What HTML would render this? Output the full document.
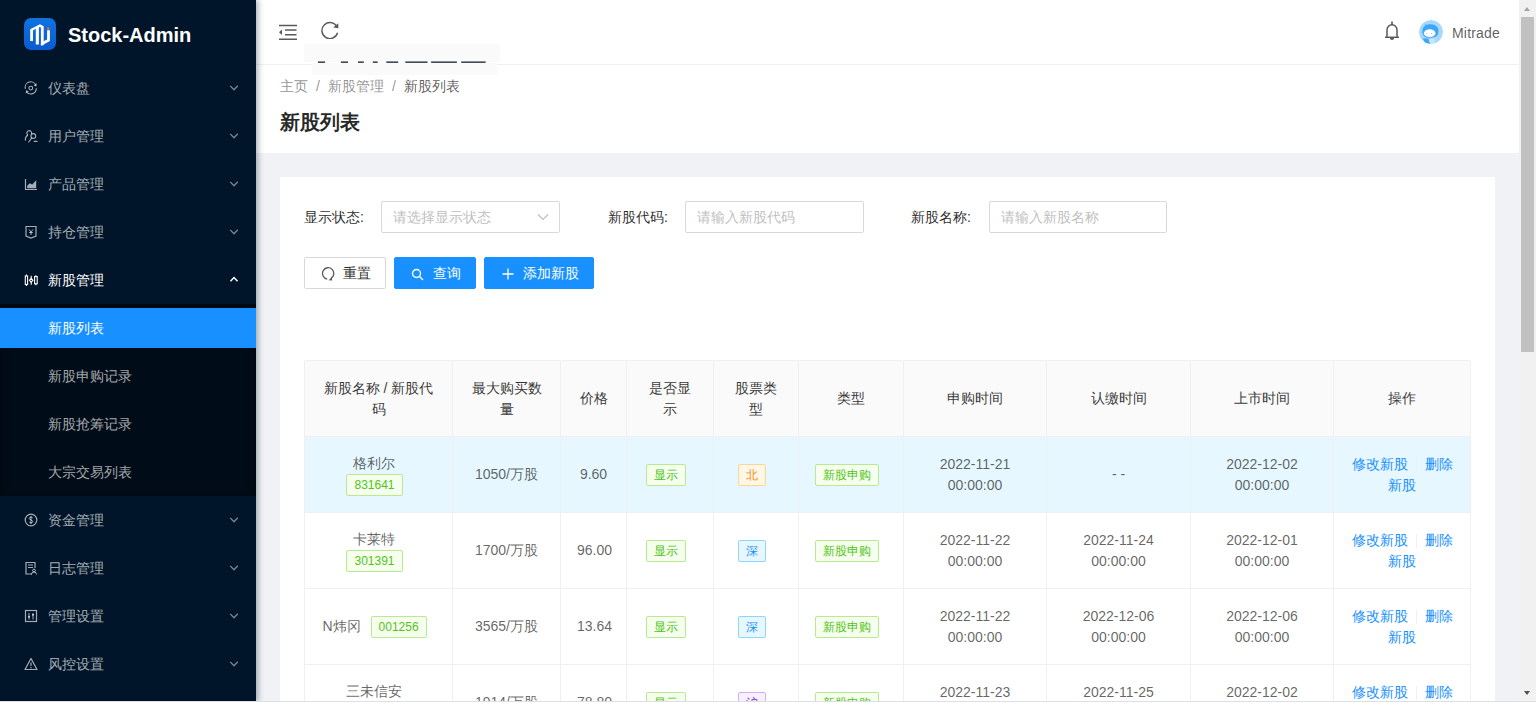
<!DOCTYPE html>
<html><head><meta charset="utf-8">
<style>
*{box-sizing:border-box;margin:0;padding:0}
html,body{width:1536px;height:702px;overflow:hidden;background:#f0f2f5;font-family:"Liberation Sans",sans-serif;font-size:14px;color:rgba(0,0,0,.85)}
#side{position:absolute;left:0;top:0;width:256px;height:702px;background:#001529;z-index:3;box-shadow:2px 0 6px rgba(0,21,41,.35)}
.logo{position:absolute;left:0;top:0;width:256px;height:64px}
.logo .ic{position:absolute;left:24px;top:18px;width:32px;height:32px;border-radius:7px;background:linear-gradient(180deg,#0e74de,#0a5bd0)}
.logo .tx{position:absolute;left:68px;top:21px;font-size:20px;font-weight:bold;color:#fff;line-height:28px}
.mi{position:absolute;left:0;width:256px;height:40px;line-height:40px;color:rgba(255,255,255,.65);font-size:14px}
.mi .t{position:absolute;left:48px;top:0}
.mi .i{position:absolute;left:24px;top:13px;width:14px;height:14px}
.mi .ar{position:absolute;left:228.5px;top:15.5px;width:10px;height:7px;opacity:.75}
.sub{position:absolute;left:0;top:304px;width:256px;height:192px;background:#000c17;box-shadow:inset 0 2px 8px rgba(0,0,0,.45)}
.sel{background:#1890ff;color:#fff}
#main{position:absolute;left:256px;top:0;width:1263px;height:702px;background:#f0f2f5}
#hdr{position:absolute;left:0;top:0;width:1263px;height:65px;background:#fff;border-bottom:1px solid #f0f0f0}
#ph{position:absolute;left:0;top:65px;width:1263px;height:88px;background:#fff}
.crumb{position:absolute;left:24px;top:10px;line-height:22px;color:rgba(0,0,0,.45)}
.crumb .sep{margin:0 8px}
.ptitle{position:absolute;left:24px;top:41px;font-size:20px;font-weight:bold;line-height:32px;color:rgba(0,0,0,.85)}
.ghost1{position:absolute;left:48px;top:44px;width:196px;height:18px;background:#fafafa}
.ghost2{position:absolute;left:56px;top:63px;width:185px;height:12px;background:#fafafa;z-index:2}
.ghostline{position:absolute;left:0;top:61px;width:250px;height:3px;z-index:3}
.avatar{position:absolute;left:1163px;top:20px;width:24px;height:24px;border-radius:50%;overflow:hidden}
.uname{position:absolute;left:1196px;top:21.5px;line-height:22px;font-size:14px;letter-spacing:.2px;color:rgba(0,0,0,.65)}
#card{position:absolute;left:24px;top:177px;width:1215px;height:600px;background:#fff}
.lbl{position:absolute;top:29px;line-height:22px;color:rgba(0,0,0,.85)}
.inp{position:absolute;top:24px;height:32px;border:1px solid #d9d9d9;border-radius:2px;background:#fff}
.inp .ph{position:absolute;left:11px;top:4px;line-height:22px;color:#bfbfbf}
.btn{position:absolute;top:80px;height:32px;line-height:30px;border:1px solid #d9d9d9;border-radius:2px;background:#fff;color:rgba(0,0,0,.85)}
.btn.pri{background:#1890ff;border-color:#1890ff;color:#fff}
.tb{position:absolute;left:24px;top:183px;width:1166px;border-collapse:separate;border-spacing:0;table-layout:fixed;border-top:1px solid #f0f0f0;border-left:1px solid #f0f0f0}
.tb th,.tb td{border-right:1px solid #f0f0f0;border-bottom:1px solid #f0f0f0;text-align:center;padding:0 16px;line-height:21px;font-weight:normal;vertical-align:middle}
.tb th{background:#fafafa;color:rgba(0,0,0,.8);height:76px}
.tb td{color:rgba(0,0,0,.62);height:76px}
.tb tr.hl td{background:#e6f7ff}
.tag{display:inline-block;height:22px;line-height:20px;padding:0 7px;font-size:12px;border:1px solid;border-radius:2px;vertical-align:top;margin-right:8px}
.tag.g{color:#52c41a;background:#f6ffed;border-color:#b7eb8f}
.tag.o{color:#fa8c16;background:#fff7e6;border-color:#ffd591}
.tag.b{color:#1890ff;background:#e6f7ff;border-color:#91d5ff}
.tag.p{color:#722ed1;background:#f9f0ff;border-color:#d3adf7}
.op a{color:#1890ff}
.nm{margin-right:10px}
.op .dv{display:inline-block;width:1px;height:14px;background:#f0f0f0;margin:0 8px;vertical-align:middle}
#sb{position:absolute;left:1519px;top:0;width:17px;height:702px;background:#f1f1f1}
#sb .th{position:absolute;left:2px;top:17px;width:13px;height:335px;background:#c1c1c1}
#sb .up{position:absolute;left:5px;top:7px;width:0;height:0;border-left:3.5px solid transparent;border-right:3.5px solid transparent;border-bottom:4px solid #a3a3a3}
#sb .dn{position:absolute;left:5px;top:691px;width:0;height:0;border-left:3.5px solid transparent;border-right:3.5px solid transparent;border-top:4px solid #505050}
#botline{position:absolute;left:0;top:701px;width:1536px;height:1px;background:#dcdfe4;z-index:10}
</style></head><body>
<div id="side">
  <div class="logo"><div class="ic"><svg width="32" height="32" viewBox="0 0 32 32"><g fill="#fff"><path d="M6.2 23.1 L6.2 11.3 L15.9 6.2 L19.7 8.2 L19.7 27.2 L16.9 27.2 L16.9 9.6 L15.9 9.1 L14.9 9.6 L14.9 26.4 L11.8 26.4 L11.8 10.8 L9 12.4 L9 23.1 Z"/><path d="M16.9 24.6 L23.1 21.6 L23.1 12.3 L25.9 12.3 L25.9 23.1 L17.8 27.4 L16.9 27.4 Z"/></g><circle cx="24.2" cy="10.6" r="1.4" fill="#e8633a"/></svg></div><div class="tx">Stock-Admin</div></div>
  <div class="mi" style="top:68px"><svg class="i" viewBox="0 0 14 14"><g fill="none" stroke="currentColor" stroke-width="1.1" stroke-linecap="round"><circle cx="6.8" cy="7.1" r="1.9"/><path d="M1.3 7.4 A5.5 5.5 0 0 1 11.8 4.3"/><path d="M12.3 7.5 A5.5 5.5 0 0 1 2.6 11"/></g><path d="M12.6 2.2 L12.4 5.4 L9.6 4.6 Z M1.7 12.5 L2.2 9.3 L4.9 10.3 Z" fill="currentColor"/></svg><span class="t">仪表盘</span><svg class="ar" viewBox="0 0 10 7"><path d="M1.2 1.9 L5 5.8 L8.8 1.7" fill="none" stroke="currentColor" stroke-width="1.3"/></svg></div>
  <div class="mi" style="top:116px"><svg class="i" viewBox="0 0 14 14"><g fill="none" stroke="currentColor" stroke-width="1.1" stroke-linecap="round"><path d="M7.6 4.6 A2.4 2.4 0 1 0 3.6 5.8"/><path d="M3.6 6.2 A5 5 0 0 0 1.4 11.2"/><circle cx="9.3" cy="7" r="2.4"/><path d="M7.8 8.9 L4.7 13"/><path d="M10.2 12.4 L13 12.4"/></g></svg><span class="t">用户管理</span><svg class="ar" viewBox="0 0 10 7"><path d="M1.2 1.9 L5 5.8 L8.8 1.7" fill="none" stroke="currentColor" stroke-width="1.3"/></svg></div>
  <div class="mi" style="top:164px"><svg class="i" viewBox="0 0 14 14"><path d="M1.5 2 L1.5 12.5 L13 12.5" fill="none" stroke="currentColor" stroke-width="1.2"/><path d="M3.2 11.2 L3.2 8.8 L5.8 6.2 L8.2 7.6 L12.2 3.2 L12.2 11.2 Z" fill="currentColor"/></svg><span class="t">产品管理</span><svg class="ar" viewBox="0 0 10 7"><path d="M1.2 1.9 L5 5.8 L8.8 1.7" fill="none" stroke="currentColor" stroke-width="1.3"/></svg></div>
  <div class="mi" style="top:212px"><svg class="i" viewBox="0 0 14 14"><path d="M2 1.5 L12 1.5 L12 11 L7 13 L2 11 Z" fill="none" stroke="currentColor" stroke-width="1.2"/><path d="M5 4.5 L7 7 L9 4.5 M7 7 L7 10 M5.2 7.5 L8.8 7.5" fill="none" stroke="currentColor" stroke-width="1"/></svg><span class="t">持仓管理</span><svg class="ar" viewBox="0 0 10 7"><path d="M1.2 1.9 L5 5.8 L8.8 1.7" fill="none" stroke="currentColor" stroke-width="1.3"/></svg></div>
  <div class="mi" style="top:260px;color:#fff"><svg class="i" viewBox="0 0 14 14"><g fill="none" stroke="currentColor" stroke-width="1.1"><rect x="1.3" y="3" width="2.3" height="8.5"/><path d="M2.45 1.6 L2.45 3 M2.45 11.5 L2.45 12.9 M7.2 2.8 L7.2 5.5 M7.2 9.1 L7.2 11.8 M11.9 2.2 L11.9 3.6 M11.9 10.8 L11.9 12.2"/><path d="M7.2 5.4 L8.9 7.3 L7.2 9.2 L5.5 7.3 Z"/><rect x="10.6" y="3.6" width="2.6" height="7.2"/></g></svg><span class="t">新股管理</span><svg class="ar" viewBox="0 0 10 7" style="opacity:1"><path d="M1.5 5.3 L5 1.6 L8.5 5.3" fill="none" stroke="currentColor" stroke-width="1.5"/></svg></div>
  <div class="sub"></div>
  <div class="mi sel" style="top:308px"><span class="t">新股列表</span></div>
  <div class="mi" style="top:356px"><span class="t">新股申购记录</span></div>
  <div class="mi" style="top:404px"><span class="t">新股抢筹记录</span></div>
  <div class="mi" style="top:452px"><span class="t">大宗交易列表</span></div>
  <div class="mi" style="top:500px"><svg class="i" viewBox="0 0 14 14"><circle cx="7" cy="7" r="5.8" fill="none" stroke="currentColor" stroke-width="1.2"/><path d="M8.8 5 C8.5 3.8 5.2 3.8 5.2 5.4 C5.2 7 8.8 6.8 8.8 8.6 C8.8 10.2 5.5 10.2 5.2 9 M7 3 L7 11" fill="none" stroke="currentColor" stroke-width="1"/></svg><span class="t">资金管理</span><svg class="ar" viewBox="0 0 10 7"><path d="M1.2 1.9 L5 5.8 L8.8 1.7" fill="none" stroke="currentColor" stroke-width="1.3"/></svg></div>
  <div class="mi" style="top:548px"><svg class="i" viewBox="0 0 14 14"><path d="M8 13 L2 13 L2 1.5 L11 1.5 L11 7" fill="none" stroke="currentColor" stroke-width="1.2"/><path d="M4 4 L9 4 M4 6.5 L9 6.5" stroke="currentColor" stroke-width="1"/><circle cx="10" cy="9.5" r="1.4" fill="none" stroke="currentColor" stroke-width="1"/><path d="M7.5 13.5 A2.5 2.5 0 0 1 12.5 13.5" fill="none" stroke="currentColor" stroke-width="1"/></svg><span class="t">日志管理</span><svg class="ar" viewBox="0 0 10 7"><path d="M1.2 1.9 L5 5.8 L8.8 1.7" fill="none" stroke="currentColor" stroke-width="1.3"/></svg></div>
  <div class="mi" style="top:596px"><svg class="i" viewBox="0 0 14 14"><rect x="1.5" y="1.5" width="11" height="11" fill="none" stroke="currentColor" stroke-width="1.2"/><path d="M5 4 L5 10.5 M9 4 L9 10.5" stroke="currentColor" stroke-width="1"/><rect x="4" y="7" width="2" height="1.6" fill="currentColor"/><rect x="8" y="5" width="2" height="1.6" fill="currentColor"/></svg><span class="t">管理设置</span><svg class="ar" viewBox="0 0 10 7"><path d="M1.2 1.9 L5 5.8 L8.8 1.7" fill="none" stroke="currentColor" stroke-width="1.3"/></svg></div>
  <div class="mi" style="top:644px"><svg class="i" viewBox="0 0 14 14"><path d="M7 1.5 L13 12.5 L1 12.5 Z" fill="none" stroke="currentColor" stroke-width="1.2" stroke-linejoin="round"/><path d="M7 5.5 L7 9" stroke="currentColor" stroke-width="1.2"/><circle cx="7" cy="10.7" r="0.7" fill="currentColor"/></svg><span class="t">风控设置</span><svg class="ar" viewBox="0 0 10 7"><path d="M1.2 1.9 L5 5.8 L8.8 1.7" fill="none" stroke="currentColor" stroke-width="1.3"/></svg></div>
</div>
<div id="main">
  <div id="hdr">
    <svg style="position:absolute;left:22.3px;top:24px" width="20" height="17" viewBox="0 0 20 17"><path d="M1 1.5 L19 1.5 M7 6 L18.5 6 M7 10.7 L18.5 10.7 M1 15.3 L19 15.3" stroke="#595959" stroke-width="1.5"/><path d="M1 8.3 L4 5.5 L4 11.1 Z" fill="#595959"/></svg>
    <svg style="position:absolute;left:64.5px;top:21.2px" width="18" height="18" viewBox="0 0 18 18"><path d="M16 5.8 A8 8 0 1 0 16.6 11.8" fill="none" stroke="#595959" stroke-width="1.4"/><path d="M17.3 2.2 L17.3 7.3 L12.3 6.6 Z" fill="#595959"/></svg>
    <div class="ghost1"></div><div class="ghost2"></div><svg class="ghostline" width="250" height="3" viewBox="0 0 250 3"><rect x="61.9" y="0.5" width="7.2" height="1.3" fill="#14202f"/><rect x="84.9" y="0.5" width="7.1" height="1.3" fill="#14202f"/><rect x="102.0" y="0.5" width="5.8" height="1.3" fill="#14202f"/><rect x="116.8" y="0.5" width="4.9" height="1.3" fill="#14202f"/><rect x="130.3" y="0.5" width="11.9" height="1.3" fill="#14202f"/><rect x="149.3" y="0.5" width="22.2" height="1.3" fill="#14202f"/><rect x="175.1" y="0.5" width="25.8" height="1.3" fill="#14202f"/><rect x="205.2" y="0.5" width="24.4" height="1.3" fill="#14202f"/></svg>
    <svg style="position:absolute;left:1128px;top:21px" width="16" height="20" viewBox="0 0 16 20"><path d="M3 16 L3 9 A5 5.2 0 0 1 13 9 L13 16" fill="none" stroke="#595959" stroke-width="1.5"/><path d="M1 16.3 L15 16.3" stroke="#595959" stroke-width="1.5"/><path d="M6 17 A2 2 0 0 0 10 17 Z" fill="#595959"/><path d="M8 1 L8 3.6" stroke="#595959" stroke-width="1.6" stroke-linecap="round"/></svg>
    <div class="avatar"><svg width="24" height="24" viewBox="0 0 24 24"><circle cx="12" cy="12" r="12" fill="#a6d8fd"/><path d="M3.4 12 C3 6.5 7 4.2 11.5 4.3 C16 4.4 19.8 6.8 19.5 11.5 C19.4 15 17.5 17.6 11.2 17.8 C5.5 17.8 3.6 15.5 3.4 12 Z" fill="#3ea6f7"/><ellipse cx="10.7" cy="13.2" rx="5.8" ry="3.9" fill="#fff"/><path d="M3.8 18.2 L11 18.8 L11.5 24 L6 23 Z" fill="#3ea6f7"/><path d="M9.5 19 L15.5 18.5 L16 22.5 L11 24 Z" fill="#c7e6fd"/><circle cx="8" cy="13.5" r=".5" fill="#9aa"/><circle cx="12.5" cy="13.5" r=".5" fill="#9aa"/><path d="M6 4.5 L8 6" stroke="#3ea6f7" stroke-width="1"/></svg></div>
    <div class="uname">Mitrade</div>
  </div>
  <div id="ph">
    <div class="crumb">主页<span class="sep">/</span>新股管理<span class="sep">/</span><span style="color:rgba(0,0,0,.65)">新股列表</span></div>
    <div class="ptitle">新股列表</div>
  </div>
  <div id="card">
    <div class="lbl" style="left:24px">显示状态:</div>
    <div class="inp" style="left:101px;width:179px"><span class="ph">请选择显示状态</span><svg style="position:absolute;left:155px;top:11px" width="12" height="8" viewBox="0 0 12 8"><path d="M1 1.5 L6 6.5 L11 1.5" fill="none" stroke="#bfbfbf" stroke-width="1.2"/></svg></div>
    <div class="lbl" style="left:328px">新股代码:</div>
    <div class="inp" style="left:405px;width:179px"><span class="ph">请输入新股代码</span></div>
    <div class="lbl" style="left:631px">新股名称:</div>
    <div class="inp" style="left:709px;width:178px"><span class="ph">请输入新股名称</span></div>
    <div class="btn" style="left:24px;width:82px"><svg style="position:absolute;left:15.5px;top:9px" width="15" height="14" viewBox="0 0 15 14"><path d="M6.2 12.2 A5.6 5.8 0 1 1 9.8 11.6" fill="none" stroke="#595959" stroke-width="1.3"/><path d="M7.6 13.2 L10.8 10.2 L11.2 13.4 Z" fill="#595959"/></svg><span style="position:absolute;left:38px">重置</span></div>
    <div class="btn pri" style="left:114px;width:82px"><svg style="position:absolute;left:15.5px;top:9.5px" width="13" height="13" viewBox="0 0 13 13"><circle cx="5.5" cy="5.5" r="4" fill="none" stroke="#fff" stroke-width="1.4"/><path d="M8.5 8.5 L12 12" stroke="#fff" stroke-width="1.4"/></svg><span style="position:absolute;left:38px">查询</span></div>
    <div class="btn pri" style="left:204px;width:110px"><svg style="position:absolute;left:17px;top:10px" width="12" height="12" viewBox="0 0 12 12"><path d="M6 0.5 L6 11.5 M0.5 6 L11.5 6" stroke="#fff" stroke-width="1.3"/></svg><span style="position:absolute;left:38px">添加新股</span></div>
    <table class="tb">
      <colgroup><col style="width:148px"><col style="width:108px"><col style="width:66px"><col style="width:87px"><col style="width:85px"><col style="width:105px"><col style="width:143px"><col style="width:144px"><col style="width:143px"><col style="width:137px"></colgroup>
      <thead><tr><th>新股名称 / 新股代码</th><th>最大购买数量</th><th>价格</th><th>是否显示</th><th>股票类型</th><th>类型</th><th>申购时间</th><th>认缴时间</th><th>上市时间</th><th>操作</th></tr></thead>
      <tbody>
        <tr class="hl"><td><span class="nm">格利尔</span><br><span class="tag g">831641</span></td><td>1050/万股</td><td>9.60</td><td><span class="tag g">显示</span></td><td><span class="tag o">北</span></td><td><span class="tag g">新股申购</span></td><td>2022-11-21<br>00:00:00</td><td>- -</td><td>2022-12-02<br>00:00:00</td><td class="op"><a>修改新股</a><i class="dv"></i><a>删除</a><br><a>新股</a></td></tr>
        <tr><td><span class="nm">卡莱特</span><br><span class="tag g">301391</span></td><td>1700/万股</td><td>96.00</td><td><span class="tag g">显示</span></td><td><span class="tag b">深</span></td><td><span class="tag g">新股申购</span></td><td>2022-11-22<br>00:00:00</td><td>2022-11-24<br>00:00:00</td><td>2022-12-01<br>00:00:00</td><td class="op"><a>修改新股</a><i class="dv"></i><a>删除</a><br><a>新股</a></td></tr>
        <tr><td>N炜冈<span class="tag g" style="margin-left:10px">001256</span></td><td>3565/万股</td><td>13.64</td><td><span class="tag g">显示</span></td><td><span class="tag b">深</span></td><td><span class="tag g">新股申购</span></td><td>2022-11-22<br>00:00:00</td><td>2022-12-06<br>00:00:00</td><td>2022-12-06<br>00:00:00</td><td class="op"><a>修改新股</a><i class="dv"></i><a>删除</a><br><a>新股</a></td></tr>
        <tr><td><span class="nm">三未信安</span><br><span class="tag g">688489</span></td><td>1914/万股</td><td>78.80</td><td><span class="tag g">显示</span></td><td><span class="tag p">沪</span></td><td><span class="tag g">新股申购</span></td><td>2022-11-23<br>00:00:00</td><td>2022-11-25<br>00:00:00</td><td>2022-12-02<br>00:00:00</td><td class="op"><a>修改新股</a><i class="dv"></i><a>删除</a><br><a>新股</a></td></tr>
      </tbody>
    </table>
  </div>
</div>
<div id="sb"><div class="up"></div><div class="th"></div><div class="dn"></div></div>
<div id="botline"></div>
</body></html>
